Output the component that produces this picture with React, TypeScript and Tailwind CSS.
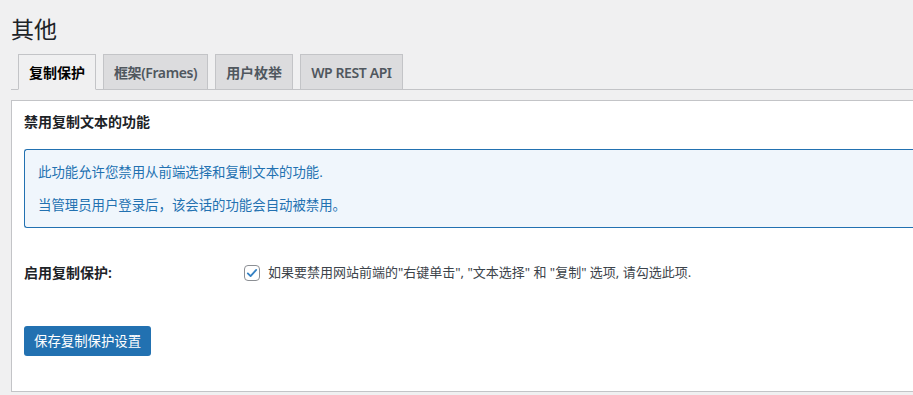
import { useState } from 'react';

const tabs = ['复制保护', '框架(Frames)', '用户枚举', 'WP REST API'];

export default function App() {
  const [active, setActive] = useState(0);
  const [checked, setChecked] = useState(true);

  return (
    <div
      className="h-[395px] w-[913px] overflow-hidden bg-[#f0f0f1] text-[#1d2327]"
      style={{ fontFamily: '"Noto Sans", "Noto Sans CJK SC", sans-serif' }}
    >
      <div className="pl-[11px]">
        {/* 標題 */}
        <h1 className="pt-[14px] text-[23px] font-normal leading-[30px] text-[#1d2327]">其他</h1>

        {/* 分頁 */}
        <nav className="mt-[11px] flex h-[35px] items-end gap-[7px] border-b border-[#c3c4c7] pl-[7px]">
          {tabs.map((t, i) => (
            <button
              key={t}
              onClick={() => setActive(i)}
              className={
                (i === active
                  ? 'relative -mb-px flex h-[36px] items-center border border-b-[#f0f0f1] border-[#c3c4c7] bg-[#f0f0f1] px-[10px] text-[14px] font-semibold text-black'
                  : 'flex h-[35px] items-center border border-b-0 border-[#c3c4c7] bg-[#dcdcde] px-[10px] text-[14px] font-semibold text-[#50575e]') +
                (/[A-Z]/.test(t) ? ' tracking-[-0.4px]' : '')
              }
            >
              {t}
            </button>
          ))}
        </nav>

        {/* 內容面板 */}
        <div className="mt-[10px] h-[292px] border border-r-0 border-[#c3c4c7] bg-white pl-[12px]">
          <h2 className="pt-[11px] text-[14px] font-semibold leading-[20px] text-[#1d2327]">禁用复制文本的功能</h2>

          <div className="mt-[17px] h-[79px] rounded-l-[3px] border border-r-0 border-[#2271b1] bg-[#f0f6fc] pl-[13px] pt-[12px] text-[13.4px] leading-[20px] text-[#2271b1]">
            <p>此功能允许您禁用从前端选择和复制文本的功能.</p>
            <p className="mt-[13px]">当管理员用户登录后，该会话的功能会自动被禁用。</p>
          </div>

          <div className="mt-[34px] flex items-center">
            <div className="w-[220px] text-[14px] font-semibold text-[#1d2327]">启用复制保护:</div>
            <label className="flex cursor-pointer items-center gap-[8px] text-[13px] text-[#3c434a]">
              <span
                onClick={() => setChecked(!checked)}
                className="flex h-[16px] w-[16px] items-center justify-center rounded-[4px] border border-[#8c8f94] bg-white"
              >
                {checked && (
                  <svg viewBox="0 0 20 20" className="h-[14px] w-[14px]">
                    <path
                      d="M4 10.5l4 4 8-9"
                      fill="none"
                      stroke="#3582c4"
                      strokeWidth="2.6"
                      strokeLinecap="round"
                      strokeLinejoin="round"
                    />
                  </svg>
                )}
              </span>
              如果要禁用网站前端的"右键单击", "文本选择" 和 "复制" 选项, 请勾选此项.
            </label>
          </div>

          <button className="mt-[43px] h-[30px] rounded-[3px] bg-[#2271b1] px-[10px] text-[13.4px] text-white">
            保存复制保护设置
          </button>
        </div>
      </div>
    </div>
  );
}
